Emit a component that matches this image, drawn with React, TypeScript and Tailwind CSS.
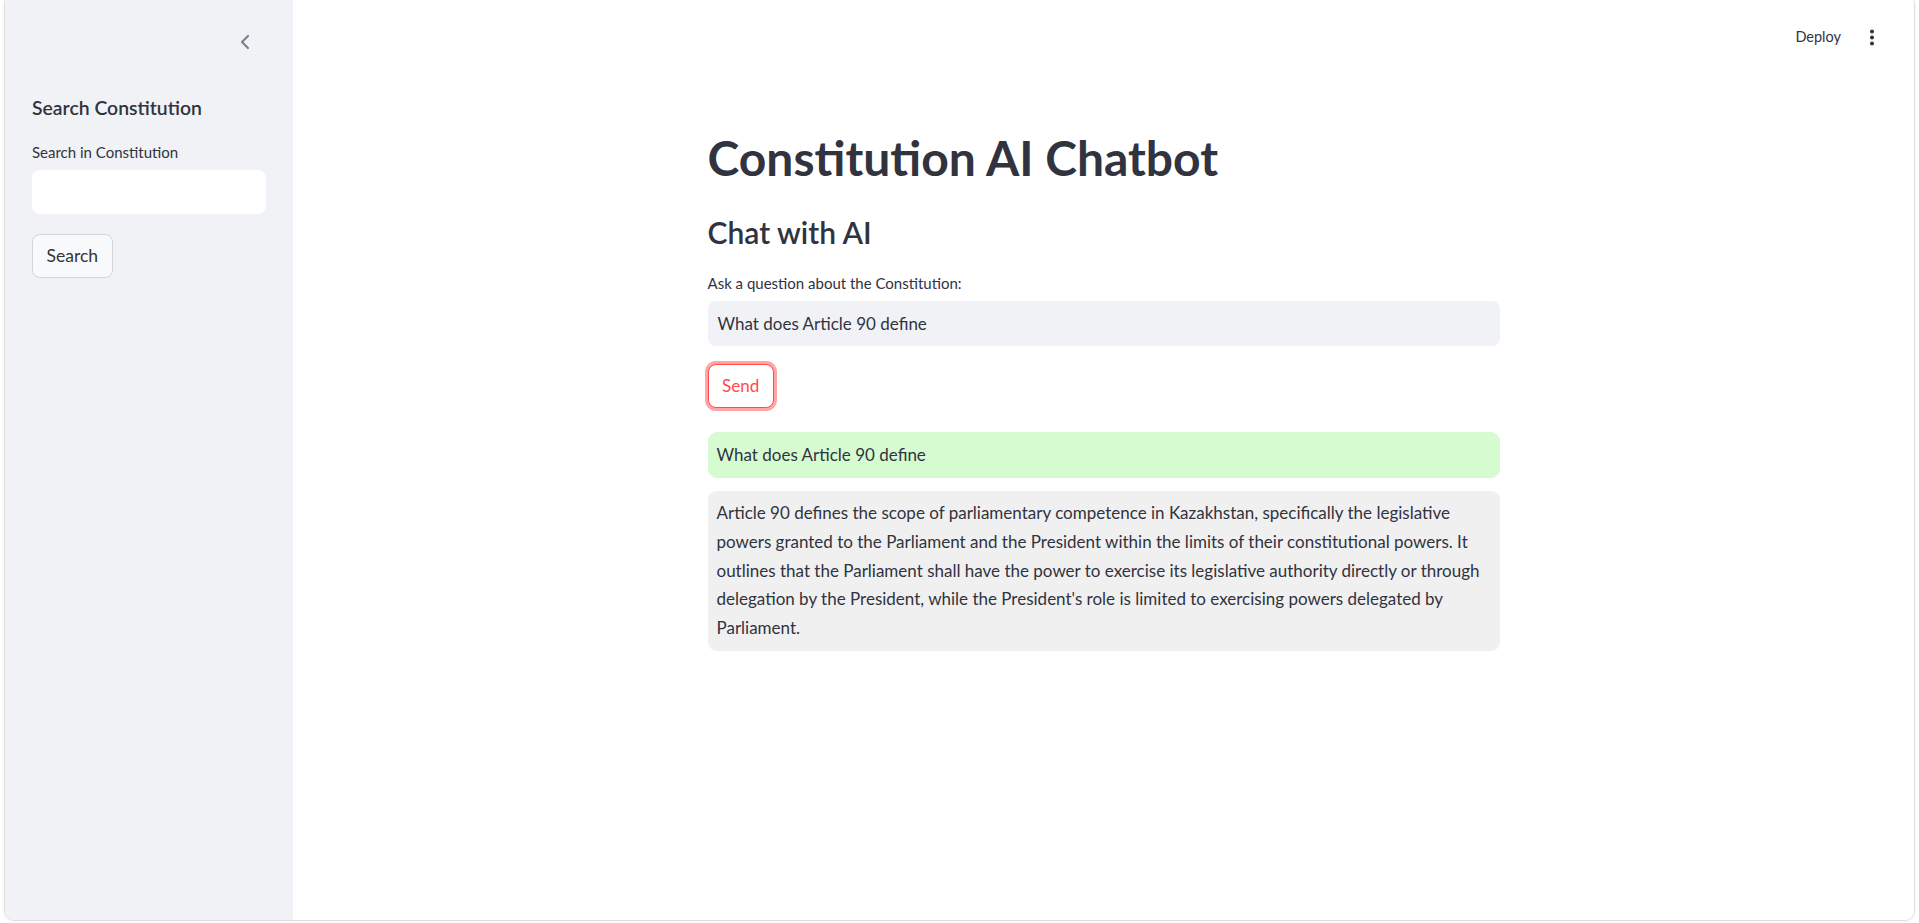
import { ChevronLeft } from "lucide-react";

const font = { fontFamily: "Lato, 'Noto Sans', sans-serif" };

function Sidebar() {
  return (
    <aside className="w-[288px] shrink-0 bg-[#f0f2f6] flex flex-col pl-[27px] pr-[21px]">
      <div className="h-[80px] pt-[35px] flex pl-[201px]">
        <ChevronLeft className="w-[24px] h-[24px] text-[#7d8190]" strokeWidth={2.2} />
      </div>
      <h2 className="mt-[19px] text-[19.4px] leading-[28px] font-semibold text-[#31333f]">
        Search Constitution
      </h2>
      <label className="mt-[19px] text-[15px] leading-[22px] text-[#31333f]">
        Search in Constitution
      </label>
      <div className="mt-[7px] h-[44px] w-[234px] rounded-[8px] bg-white" />
      <div className="mt-[20px]">
        <button className="h-[44px] px-[13.5px] rounded-[8px] border border-[#d3d5db] bg-[#f8f9fb] text-[17.5px] text-[#31333f]">
          Search
        </button>
      </div>
    </aside>
  );
}

function Header() {
  return (
    <div className="h-[84px] flex items-center justify-end gap-[25px] pr-[36px]">
      <span className="text-[14.5px] text-[#31333f]">Deploy</span>
      <svg width="12" height="18" viewBox="0 0 12 18" className="text-[#31333f]">
        <circle cx="6" cy="3.5" r="2" fill="currentColor" />
        <circle cx="6" cy="9.5" r="2" fill="currentColor" />
        <circle cx="6" cy="15.5" r="2" fill="currentColor" />
      </svg>
    </div>
  );
}

export default function App() {
  const answer = [
    "Article 90 defines the scope of parliamentary competence in Kazakhstan, specifically the legislative",
    "powers granted to the Parliament and the President within the limits of their constitutional powers. It",
    "outlines that the Parliament shall have the power to exercise its legislative authority directly or through",
    "delegation by the President, while the President's role is limited to exercising powers delegated by",
    "Parliament.",
  ];

  return (
    <div className="h-[923px] w-full overflow-hidden bg-white px-[4px]" style={font}>
      <div className="h-[927px] -mt-[6px] flex rounded-[10px] border border-[#dedede] overflow-hidden shadow-[0_0_3px_rgba(0,0,0,0.08)]">
        <Sidebar />
        <main className="flex-1 bg-white flex flex-col">
          <Header />
          <div className="w-[792px] mx-auto flex flex-col text-[#31333f]">
            <h1 className="mt-[50px] text-[48px] leading-[58px] font-bold">
              Constitution AI Chatbot
            </h1>
            <h3 className="mt-[27px] text-[30px] leading-[36px] font-semibold">
              Chat with AI
            </h3>
            <label className="mt-[22px] text-[15px] leading-[22px]">
              Ask a question about the Constitution:
            </label>
            <div className="mt-[7px] h-[45px] rounded-[8px] bg-[#f0f2f6] flex items-center px-[10px] text-[17px]">
              What does Article 90 define
            </div>
            <div className="mt-[18px]">
              <button className="h-[44px] px-[13.5px] rounded-[8px] border border-[#ff4b4b] text-[#ff4b4b] text-[17px] bg-white shadow-[0_0_0_3px_rgba(255,75,75,0.5)]">
                Send
              </button>
            </div>
            <div className="mt-[24px] h-[46px] rounded-[9px] bg-[#d7fbd1] flex items-center px-[9px] text-[17px]">
              What does Article 90 define
            </div>
            <div className="mt-[13px] rounded-[9px] bg-[#f0f0f0] px-[9px] py-[8px] text-[17px] leading-[28.8px]">
              {answer.map((line) => (
                <div key={line} className="whitespace-nowrap">
                  {line}
                </div>
              ))}
            </div>
          </div>
        </main>
      </div>
    </div>
  );
}
